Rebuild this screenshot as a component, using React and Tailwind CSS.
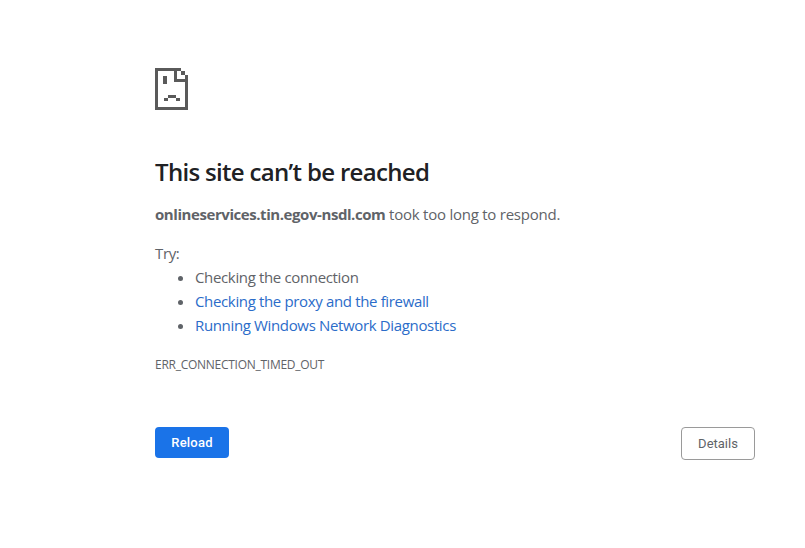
import React from 'react';

const SadFile = () => (
    <svg width="34" height="42" viewBox="0 0 34 42" shapeRendering="crispEdges" fill="#5a5a5a">
        {/* outline */}
        <path d="M0 0h26v3H3v36h27V7h3v35H0z" />
        {/* page fold */}
        <path d="M19 0h3v11h8v3H19z" />
        <path d="M26 3h4v4h-4z" />
        {/* eye */}
        <path d="M8 8h4v8H8z" />
        {/* frown */}
        <path d="M13 27h8v3h-8zM9 30h4v3H9zM21 30h4v3h-4z" />
    </svg>
);

const App = () => {
    return (
        <div className="min-h-[548px] bg-white pl-[155px] pr-[50px] pt-[68px] text-[15px] text-[#5f6368] font-['Open_Sans',sans-serif]">
            <SadFile />
            <h1 className="mt-[46px] text-[24px] leading-[32px] font-semibold text-[#202124] tracking-[-0.68px]">
                This site can’t be reached
            </h1>
            <p className="mt-[14px] leading-[24px] tracking-[-0.24px]">
                <span className="font-bold tracking-[-0.43px]">onlineservices.tin.egov-nsdl.com</span> took too long to respond.
            </p>
            <p className="mt-[15px] leading-[24px] tracking-[-0.35px]">Try:</p>
            <ul className="list-disc pl-[40px] leading-[24px] tracking-[-0.35px]">
                <li>Checking the connection</li>
                <li className="text-[#2b6cc9] marker:text-[#5f6368]">Checking the proxy and the firewall</li>
                <li className="text-[#2b6cc9] marker:text-[#5f6368]">Running Windows Network Diagnostics</li>
            </ul>
            <div className="mt-[20px] text-[12px] leading-[16px] tracking-[-0.27px]">ERR_CONNECTION_TIMED_OUT</div>
            <div className="mt-[54px] flex items-start justify-between font-['Roboto',sans-serif]">
                <button className="w-[74px] h-[31px] rounded-[4px] bg-[#1a73e8] text-white text-[13px] font-medium tracking-[0.2px]">
                    Reload
                </button>
                <button className="w-[74px] h-[33px] rounded-[4px] border border-[#9a9a9a] bg-white text-[13px] text-[#5f6368]">
                    Details
                </button>
            </div>
        </div>
    );
};

export default App;
